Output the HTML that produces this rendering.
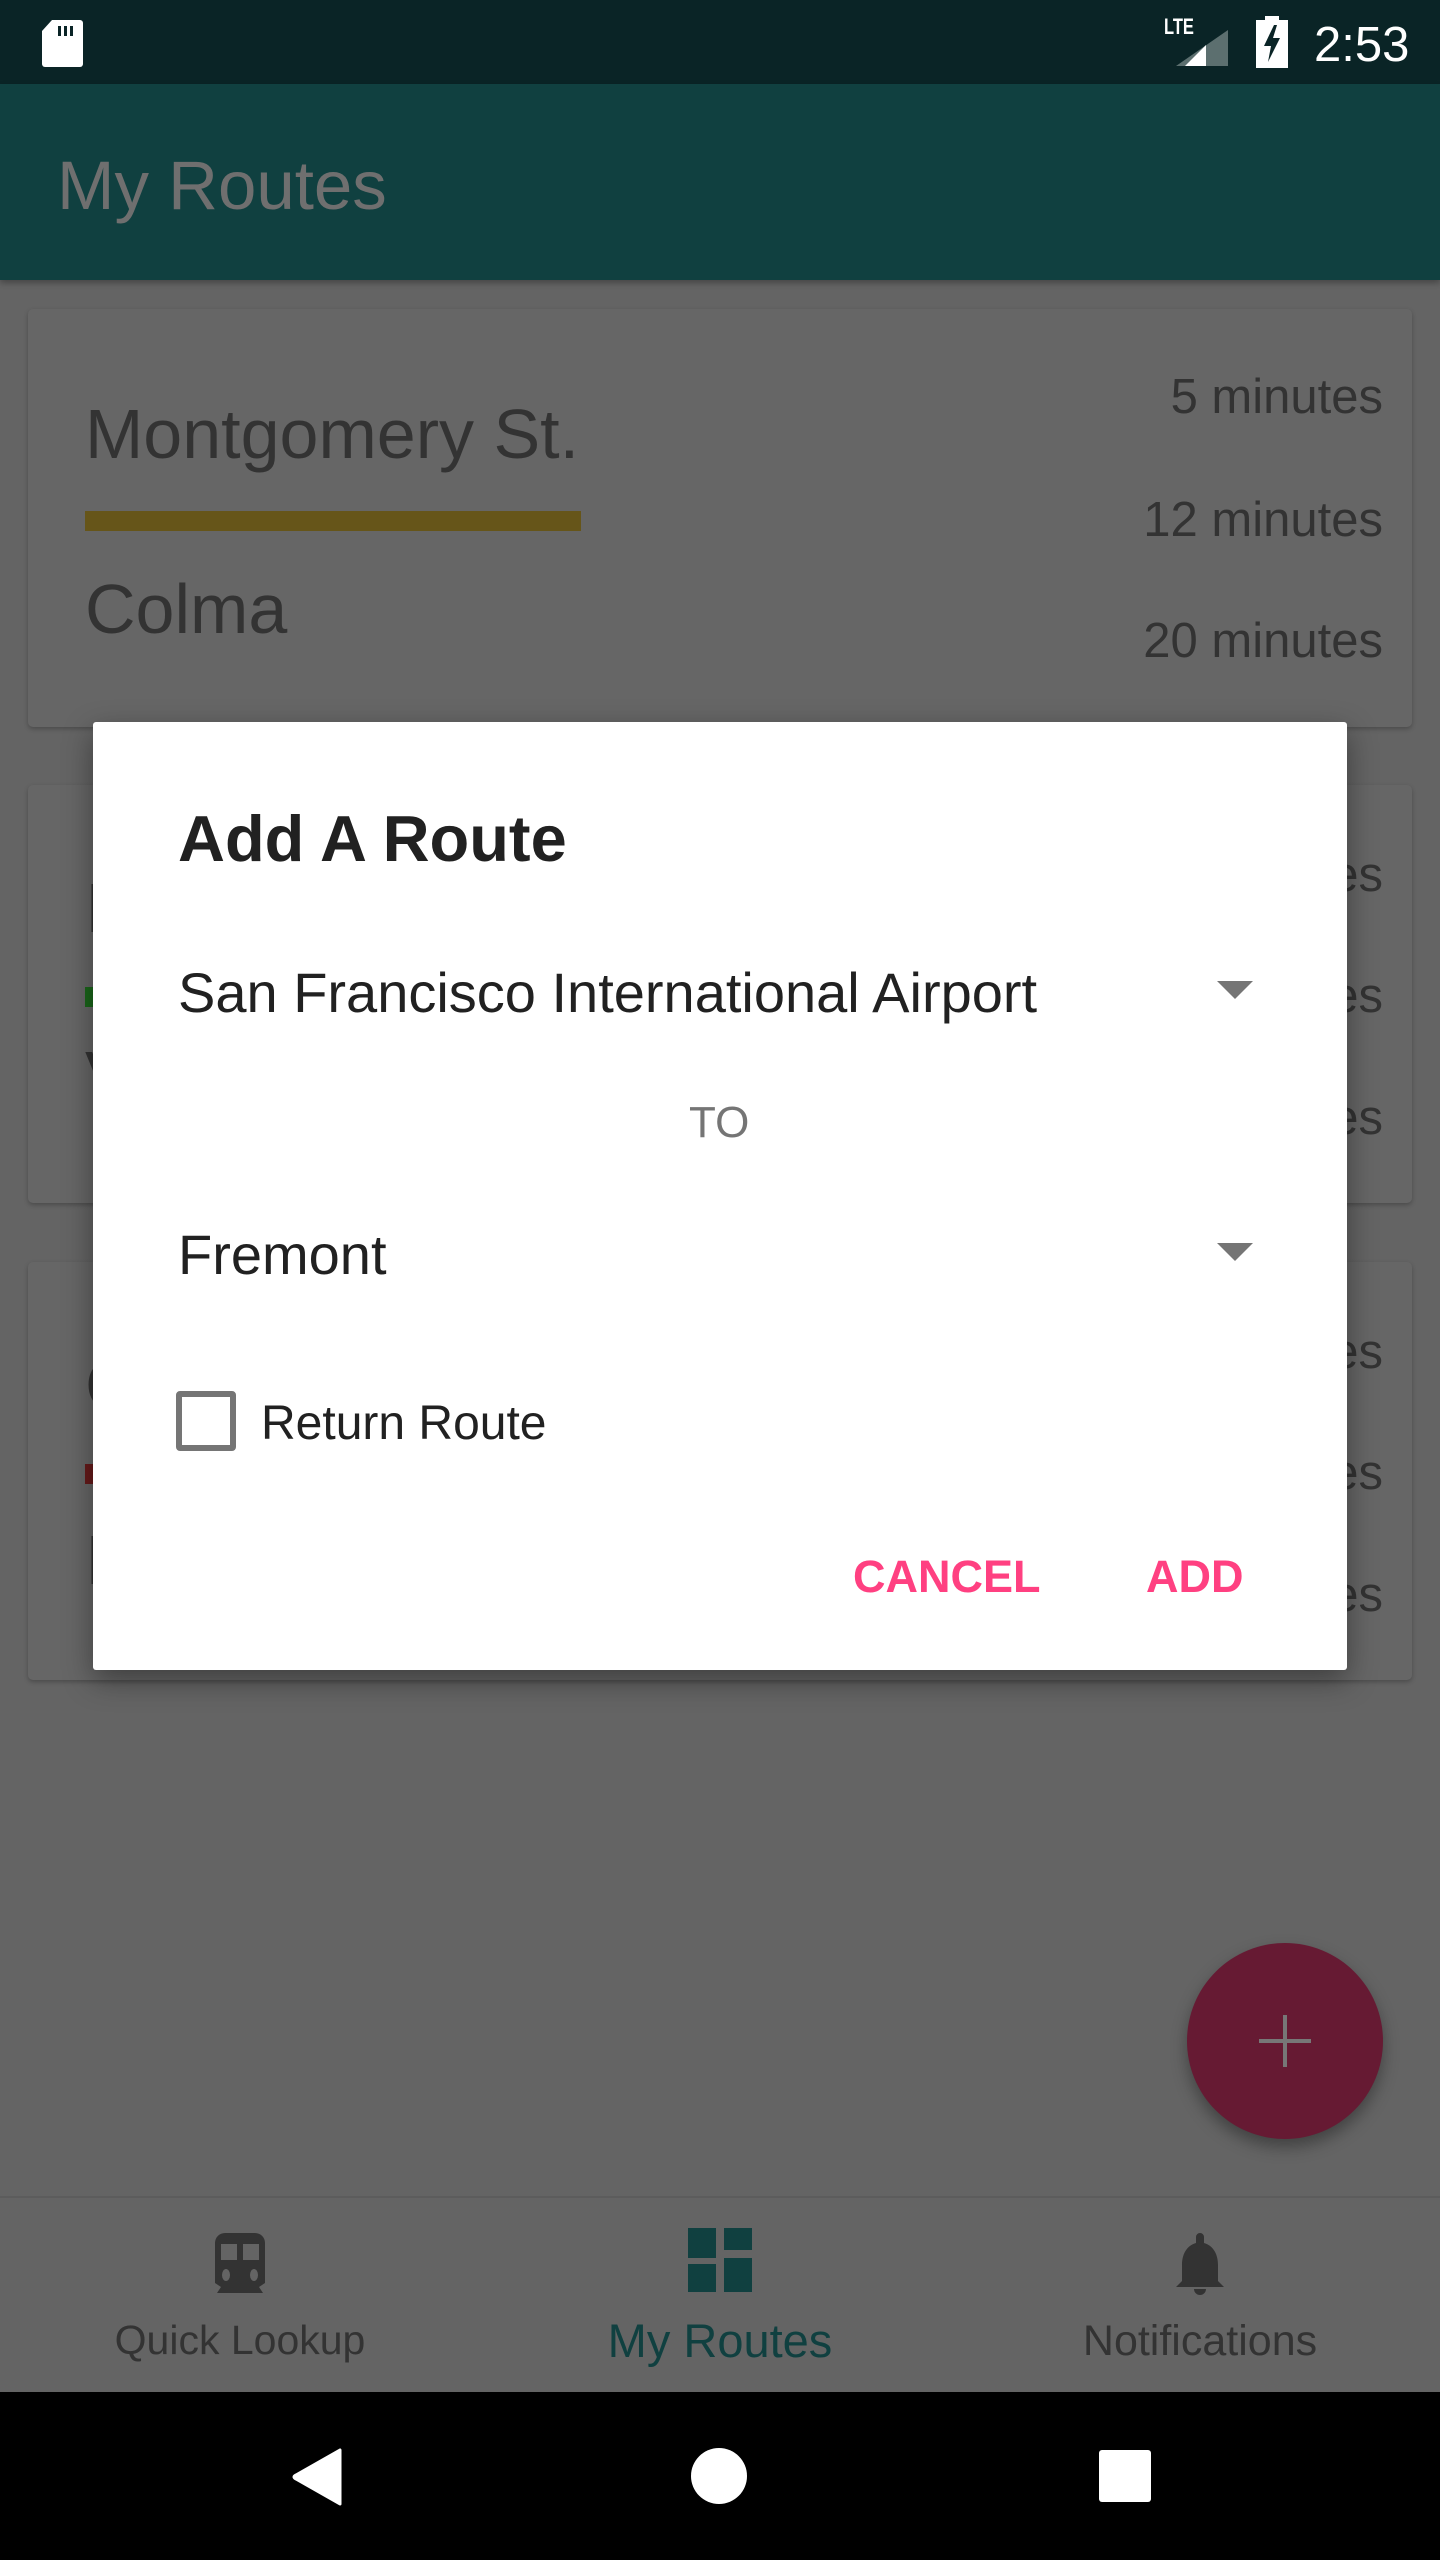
<!DOCTYPE html>
<html><head><meta charset="utf-8"><style>
*{margin:0;padding:0;box-sizing:border-box}
body{width:1440px;height:2560px;background:#646464;position:relative;overflow:hidden;font-family:"Liberation Sans",sans-serif}
.abs{position:absolute;white-space:nowrap}
.card{position:absolute;left:28px;width:1384px;background:#666;border-radius:5px;box-shadow:0 2px 5px rgba(0,0,0,.25)}
.t{position:absolute;color:#333;line-height:1}
.big{font-size:70px}
.min{font-size:49px;right:29px}
</style></head><body>
<div class="abs" style="left:0;top:0;width:1440px;height:84px;background:#0a2426"></div>
<svg class="abs" style="left:40px;top:18px" width="44" height="50" viewBox="0 0 44 50"><path d="M12 2H40a3 3 0 0 1 3 3V46a3 3 0 0 1-3 3H5a3 3 0 0 1-3-3V13z" fill="#fff"/><rect x="18" y="8" width="3" height="10" fill="#0a2426"/><rect x="24" y="8" width="3" height="10" fill="#0a2426"/><rect x="30" y="8" width="3" height="10" fill="#0a2426"/></svg>
<div class="abs" style="left:1164px;top:14px;font-size:22px;font-weight:bold;color:#fff;transform:scaleX(.75);transform-origin:left">LTE</div>
<svg class="abs" style="left:1176px;top:30px" width="52" height="36"><polygon points="52,0 52,36 0,36" fill="#5c6f6f"/><polygon points="30,15 30,36 9,36" fill="#fff"/></svg>
<svg class="abs" style="left:1256px;top:16px" width="32" height="52"><rect x="9" y="0" width="14" height="5" fill="#fff"/><rect x="0" y="4" width="32" height="48" fill="#fff"/><polygon points="18,9 8,30 15,30 12,46 24,22 17,22 21,9" fill="#0a2426"/></svg>
<div class="abs" style="left:1314px;top:17px;font-size:49px;color:#fff">2:53</div>
<div class="abs" style="left:0;top:84px;width:1440px;height:196px;background:#104040;box-shadow:0 3px 6px rgba(0,0,0,.3)"></div>
<div class="abs" style="left:57px;top:146px;font-size:69px;color:#6f6f6f">My Routes</div>

<div class="card" style="top:309px;height:418px">
<div class="t big" style="left:57px;top:90px">Montgomery St.</div>
<div class="abs" style="left:57px;top:202px;width:496px;height:20px;background:#665519"></div>
<div class="t big" style="left:57px;top:265px">Colma</div>
<div class="t min" style="top:64px">5 minutes</div>
<div class="t min" style="top:187px">12 minutes</div>
<div class="t min" style="top:308px">20 minutes</div>
</div>
<div class="card" style="top:785px;height:418px">
<div class="t big" style="left:57px;top:88px">I</div>
<div class="abs" style="left:57px;top:202px;width:496px;height:20px;background:#1a661a"></div>
<div class="t big" style="left:57px;top:256px">V</div>
<div class="t min" style="top:66px">5 minutes</div>
<div class="t min" style="top:187px">9 minutes</div>
<div class="t min" style="top:309px">11 minutes</div>
</div>
<div class="card" style="top:1262px;height:418px">
<div class="t big" style="left:57px;top:88px">C</div>
<div class="abs" style="left:57px;top:202px;width:496px;height:20px;background:#661a1a"></div>
<div class="t big" style="left:57px;top:263px">I</div>
<div class="t min" style="top:66px">5 minutes</div>
<div class="t min" style="top:187px">9 minutes</div>
<div class="t min" style="top:309px">11 minutes</div>
</div>

<div class="abs" style="left:93px;top:722px;width:1254px;height:948px;background:#fff;border-radius:3px;box-shadow:0 10px 30px rgba(0,0,0,.4)">
<div class="abs" style="left:85px;top:79px;font-size:65px;font-weight:bold;color:#212121">Add A Route</div>
<div class="abs" style="left:85px;top:238px;font-size:56px;color:#212121">San Francisco International Airport</div>
<svg class="abs" style="left:1124px;top:259px" width="36" height="18"><polygon points="0,0 36,0 18,18" fill="#757575"/></svg>
<div class="abs" style="left:596px;top:376px;font-size:44px;color:#757575">TO</div>
<div class="abs" style="left:85px;top:500px;font-size:56px;color:#212121">Fremont</div>
<svg class="abs" style="left:1124px;top:521px" width="36" height="18"><polygon points="0,0 36,0 18,18" fill="#757575"/></svg>
<div class="abs" style="left:83px;top:669px;width:60px;height:60px;border:6px solid #757575;border-radius:4px"></div>
<div class="abs" style="left:168px;top:674px;font-size:48px;color:#212121">Return Route</div>
<div class="abs" style="left:760px;top:829px;font-size:45px;font-weight:bold;color:#ff4081">CANCEL</div>
<div class="abs" style="left:1053px;top:829px;font-size:45px;font-weight:bold;color:#ff4081">ADD</div>
</div>

<div class="abs" style="left:1187px;top:1943px;width:196px;height:196px;border-radius:50%;background:#661a33;box-shadow:0 8px 16px rgba(0,0,0,.35)"></div>
<div class="abs" style="left:1283px;top:2015px;width:4px;height:52px;background:#777"></div>
<div class="abs" style="left:1259px;top:2039px;width:52px;height:4px;background:#777"></div>

<div class="abs" style="left:0;top:2196px;width:1440px;height:196px;background:#646464;border-top:2px solid #5c5c5c"></div>
<svg class="abs" style="left:211px;top:2233px" width="58" height="60" viewBox="0 0 58 60"><path d="M4 10a10 10 0 0 1 10-10h30a10 10 0 0 1 10 10v40l-6 4 4 6H6l4-6-6-4z" fill="#333"/><rect x="10" y="11" width="16" height="16" fill="#646464"/><rect x="32" y="11" width="16" height="16" fill="#646464"/><ellipse cx="15" cy="42" rx="4" ry="6" fill="#646464"/><ellipse cx="43" cy="42" rx="4" ry="6" fill="#646464"/></svg>
<svg class="abs" style="left:688px;top:2228px" width="64" height="64"><rect x="0" y="0" width="28" height="64" fill="#104040"/><rect x="36" y="0" width="28" height="22" fill="#104040"/><rect x="36" y="30" width="28" height="34" fill="#104040"/><rect x="0" y="30" width="28" height="6" fill="#646464"/></svg>
<svg class="abs" style="left:1170px;top:2233px" width="60" height="64" viewBox="0 0 60 64"><path d="M30 0a4 4 0 0 1 4 4v6c10 3 14 12 14 22v16l6 6H6l6-6V32c0-10 4-19 14-22V4a4 4 0 0 1 4-4z" fill="#333"/><path d="M24 56h12a6 6 0 0 1-12 0z" fill="#333"/></svg>
<div class="abs" style="left:0;width:480px;top:2317px;text-align:center;font-size:41px;color:#333">Quick Lookup</div>
<div class="abs" style="left:480px;width:480px;top:2313px;text-align:center;font-size:47px;color:#104040">My Routes</div>
<div class="abs" style="left:960px;width:480px;top:2317px;text-align:center;font-size:43px;color:#333">Notifications</div>

<div class="abs" style="left:0;top:2392px;width:1440px;height:168px;background:#000"></div>
<svg class="abs" style="left:290px;top:2448px" width="52" height="58"><path d="M50 2V56L6 31Q2 29 6 27Z" fill="#fff" stroke="#fff" stroke-width="3" stroke-linejoin="round"/></svg>
<div class="abs" style="left:691px;top:2448px;width:56px;height:56px;border-radius:50%;background:#fff"></div>
<div class="abs" style="left:1099px;top:2450px;width:52px;height:52px;border-radius:3px;background:#fff"></div>
</body></html>
